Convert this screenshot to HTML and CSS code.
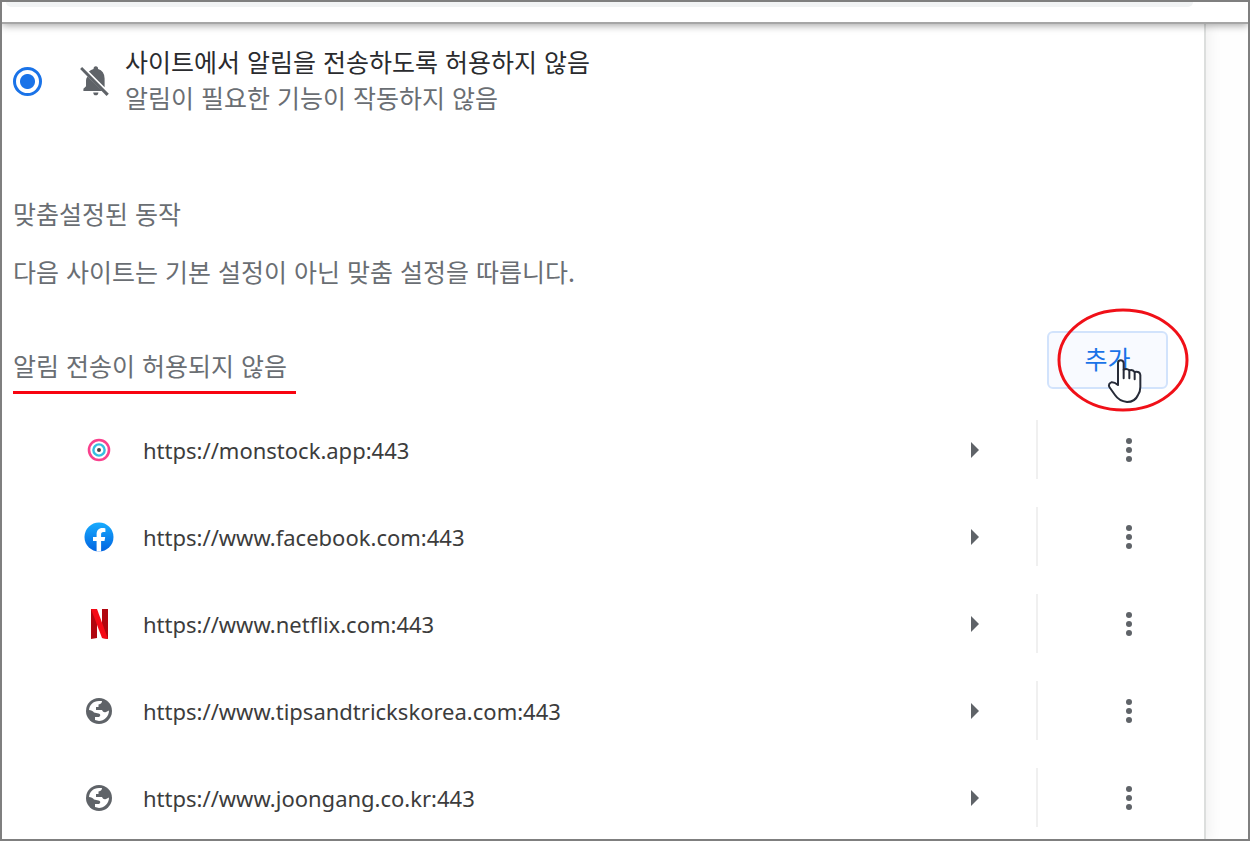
FILE: index.html
```html
<!DOCTYPE html>
<html lang="ko">
<head>
	<meta charset="utf-8">
	<meta name="viewport" content="width=device-width">
	<title>알림</title>
	<link rel="stylesheet" href="styles.css">
</head>
<body>

<svg class="defs" width="0" height="0" aria-hidden="true">
	<linearGradient id="fb-blue" x1="0" y1="0" x2="0" y2="1">
		<stop offset="0" stop-color="#18acfe"/>
		<stop offset="1" stop-color="#0163e0"/>
	</linearGradient>
	<symbol id="globe" viewBox="0 0 26 26">
		<circle cx="13" cy="13" r="13" fill="#5f6368"/>
		<path fill="#fff" d="M3 12C3.500 7 7 3 13 3h3c0 2-1 3-3.500 3.500V9H10v3h6c1 2 2 2.500 4 2l3-1.500C23 18.500 18 23 13 23l-4-1v-3h4c2-1 1.500-3-.5-3.500L8 14.500C7 13 5 12 3 12z"/>
	</symbol>
	<symbol id="arrow" viewBox="0 0 8 16">
		<path fill="#5f6368" d="M0 0l8 8-8 8z"/>
	</symbol>
	<symbol id="dots" viewBox="0 0 8 26">
		<g fill="#5f6368"><circle cx="4" cy="4" r="3"/><circle cx="4" cy="13" r="3"/><circle cx="4" cy="22" r="3"/></g>
	</symbol>
</svg>

<div class="window">
	<div class="toolbar"><div class="omnibox"></div></div>

	<main class="panel">
		<div class="option">
			<input type="radio" name="notifications" id="block" checked>
			<svg class="bell" viewBox="240 200 88 92" aria-hidden="true">
				<g fill="#5f6368">
					<path d="M246 203l82 82-7 7-81-83z"/>
					<path d="M263 232l45 45h-58v-7l8-8v-18q0-7 5-12z"/>
					<path d="M267 217q6-6 14-8 0-8 7-8t7 8q19 5 20 29v27z"/>
					<path d="M280 281h16q-1 9-8 9t-8-9z"/>
				</g>
			</svg>
			<label for="block">
				사이트에서 알림을 전송하도록 허용하지 않음
				<span class="sub">알림이 필요한 기능이 작동하지 않음</span>
			</label>
		</div>

		<h2>맞춤설정된 동작</h2>
		<p class="desc">다음 사이트는 기본 설정이 아닌 맞춤 설정을 따릅니다.</p>

		<div class="listhead">
			<h3>알림 전송이 허용되지 않음</h3>
			<div class="addbox">
				<button class="add">추가</button>
				<svg class="ring" viewBox="0 0 132 104" aria-hidden="true">
					<ellipse cx="66" cy="52" rx="64" ry="50" fill="none" stroke="#f01018" stroke-width="3"/>
				</svg>
				<svg class="hand" viewBox="234 178 105 132" aria-hidden="true">
					<path fill="#fff" stroke="#272b38" stroke-width="6" stroke-linejoin="round" d="M267 190q0-8 8-8t9 8v20q9-5 17 2 9-4 16 5 16-3 17 9v36q0 14-7 24-9 21-33 21-24-3-36-21l-17-24q-4-10 6-14 9-1 20 8z"/>
					<path fill="none" stroke="#272b38" stroke-width="6" stroke-linecap="round" d="M284 210v26M301 212v24M317 217v22"/>
				</svg>
			</div>
		</div>

		<ul class="sites">
			<li>
				<svg class="icon" viewBox="0 0 30 30" aria-hidden="true">
					<g fill="none">
						<circle cx="15" cy="15" r="10" stroke="#f9418d" stroke-width="2.6"/>
						<circle cx="15" cy="15" r="5.6" stroke="#35bfe0" stroke-width="2.4"/>
						<circle cx="15" cy="15" r="2" fill="#444"/>
					</g>
				</svg>
				<a class="url" href="#">https://monstock.app:443</a>
				<button class="go" aria-label="세부정보"><svg width="8" height="16"><use href="#arrow"/></svg></button>
				<button class="more" aria-label="추가 작업"><svg width="8" height="26"><use href="#dots"/></svg></button>
			</li>
			<li>
				<svg class="icon" viewBox="0 0 30 30" aria-hidden="true">
					<circle cx="15" cy="15" r="14.5" fill="url(#fb-blue)"/>
					<path fill="#fff" d="M12.6 29.4V19H9v-4h3.600v-2.500C12.600 8.200 14.800 6 18.400 6c1.100 0 2.300.2 3 .4V10h-1.900c-1.900 0-2.400 1-2.400 2.300V15h4.100l-.7 4h-3.400v10.400z"/>
				</svg>
				<a class="url" href="#">https://www.facebook.com:443</a>
				<button class="go" aria-label="세부정보"><svg width="8" height="16"><use href="#arrow"/></svg></button>
				<button class="more" aria-label="추가 작업"><svg width="8" height="26"><use href="#dots"/></svg></button>
			</li>
			<li>
				<svg class="icon" viewBox="0 0 30 30" aria-hidden="true">
					<path fill="#b1060f" d="M7 0h6v29l-6 1zM18 0h6v30l-6-1z"/>
					<path fill="#f50a16" d="M7 0h6l11 30-6-1z"/>
				</svg>
				<a class="url" href="#">https://www.netflix.com:443</a>
				<button class="go" aria-label="세부정보"><svg width="8" height="16"><use href="#arrow"/></svg></button>
				<button class="more" aria-label="추가 작업"><svg width="8" height="26"><use href="#dots"/></svg></button>
			</li>
			<li>
				<svg class="icon globe" aria-hidden="true"><use href="#globe"/></svg>
				<a class="url" href="#">https://www.tipsandtrickskorea.com:443</a>
				<button class="go" aria-label="세부정보"><svg width="8" height="16"><use href="#arrow"/></svg></button>
				<button class="more" aria-label="추가 작업"><svg width="8" height="26"><use href="#dots"/></svg></button>
			</li>
			<li>
				<svg class="icon globe" aria-hidden="true"><use href="#globe"/></svg>
				<a class="url" href="#">https://www.joongang.co.kr:443</a>
				<button class="go" aria-label="세부정보"><svg width="8" height="16"><use href="#arrow"/></svg></button>
				<button class="more" aria-label="추가 작업"><svg width="8" height="26"><use href="#dots"/></svg></button>
			</li>
		</ul>
	</main>
</div>

</body>
</html>
```
FILE: styles.css
```css
* {
	box-sizing: border-box;
}
body {
	margin: 0;
	background: white;
	color: #2a2b2e;
	font-family: "Noto Sans CJK KR", sans-serif;
	font-size: 25px;
	font-weight: 400;
	line-height: 36px;
}
.defs {
	position: absolute;
}
.window {
	display: flex;
	flex-direction: column;
	height: 100vh;
	overflow: hidden;
	border: 2px solid #7f7f7f;
	background: #fefefe;
}

.toolbar {
	flex: none;
	height: 22px;
	padding: 0 55px 0 4px;
	border-bottom: 2px solid #a6a6a6;
	background: white;
	box-shadow: 0 1px 9px rgba(0, 0, 0, .4);
	z-index: 1;
}
.omnibox {
	height: 5px;
	border-radius: 0 0 12px 12px;
	background: #f1f3f4;
}

.panel {
	flex: 1 0 auto;
	margin-right: 42px;
	padding: 19px 0 0 11px;
	border-right: 2px solid #dcdedd;
	background: white;
	box-shadow: 2px 0 14px rgba(0, 0, 0, .07);
}

.option {
	display: flex;
	align-items: center;
	margin-bottom: 76px;
}
.option input {
	appearance: none;
	width: 29px;
	height: 29px;
	margin: 0 38px 0 0;
	border: 3px solid #1a73e8;
	border-radius: 50%;
	background: radial-gradient(circle, #1a73e8 7px, white 8px);
}
.option label {
	padding-bottom: 4px;
}
.bell {
	width: 29px;
	height: 30px;
	margin-right: 16px;
}
.sub {
	display: block;
	color: #6a6e73;
}

h2, h3, .desc {
	margin: 0;
	color: #6a6e73;
	font-size: 25px;
	font-weight: 400;
}
.desc {
	margin-top: 22px;
}

.listhead {
	display: flex;
	align-items: flex-end;
	justify-content: space-between;
	margin: 42px 36px 12px 0;
}
h3 {
	padding: 0 9px 8px 0;
	border-bottom: 3px solid #f80410;
}
.addbox {
	position: relative;
	margin-bottom: 5px;
}
.add {
	display: block;
	width: 121px;
	height: 58px;
	padding: 0 0 4px;
	border: 2px solid #d2e3fc;
	border-radius: 6px;
	background: #f8faff;
	color: #1a73e8;
	font: inherit;
}
.ring {
	position: absolute;
	left: 10px;
	top: -23px;
	width: 132px;
	height: 104px;
}
.hand {
	position: absolute;
	left: 60px;
	top: 28px;
	width: 35px;
	height: 44px;
}

.sites {
	margin: 0;
	padding: 0;
	list-style: none;
}
.sites li {
	display: flex;
	align-items: center;
	height: 87px;
	padding-left: 71px;
}
.icon {
	flex: none;
	width: 30px;
	height: 30px;
	margin-right: 29px;
}
.icon.globe {
	padding: 2px;
}
.url {
	flex: 1;
	color: #3c3c3c;
	font-family: "Noto Sans", sans-serif;
	font-size: 22px;
	text-decoration: none;
}
.go, .more {
	display: flex;
	align-items: center;
	justify-content: center;
	height: 59px;
	padding: 0;
	border: 0;
	background: none;
}
.go {
	width: 122px;
}
.more {
	width: 168px;
	padding-left: 15px;
	border-left: 2px solid #f0f0f0;
}
```
